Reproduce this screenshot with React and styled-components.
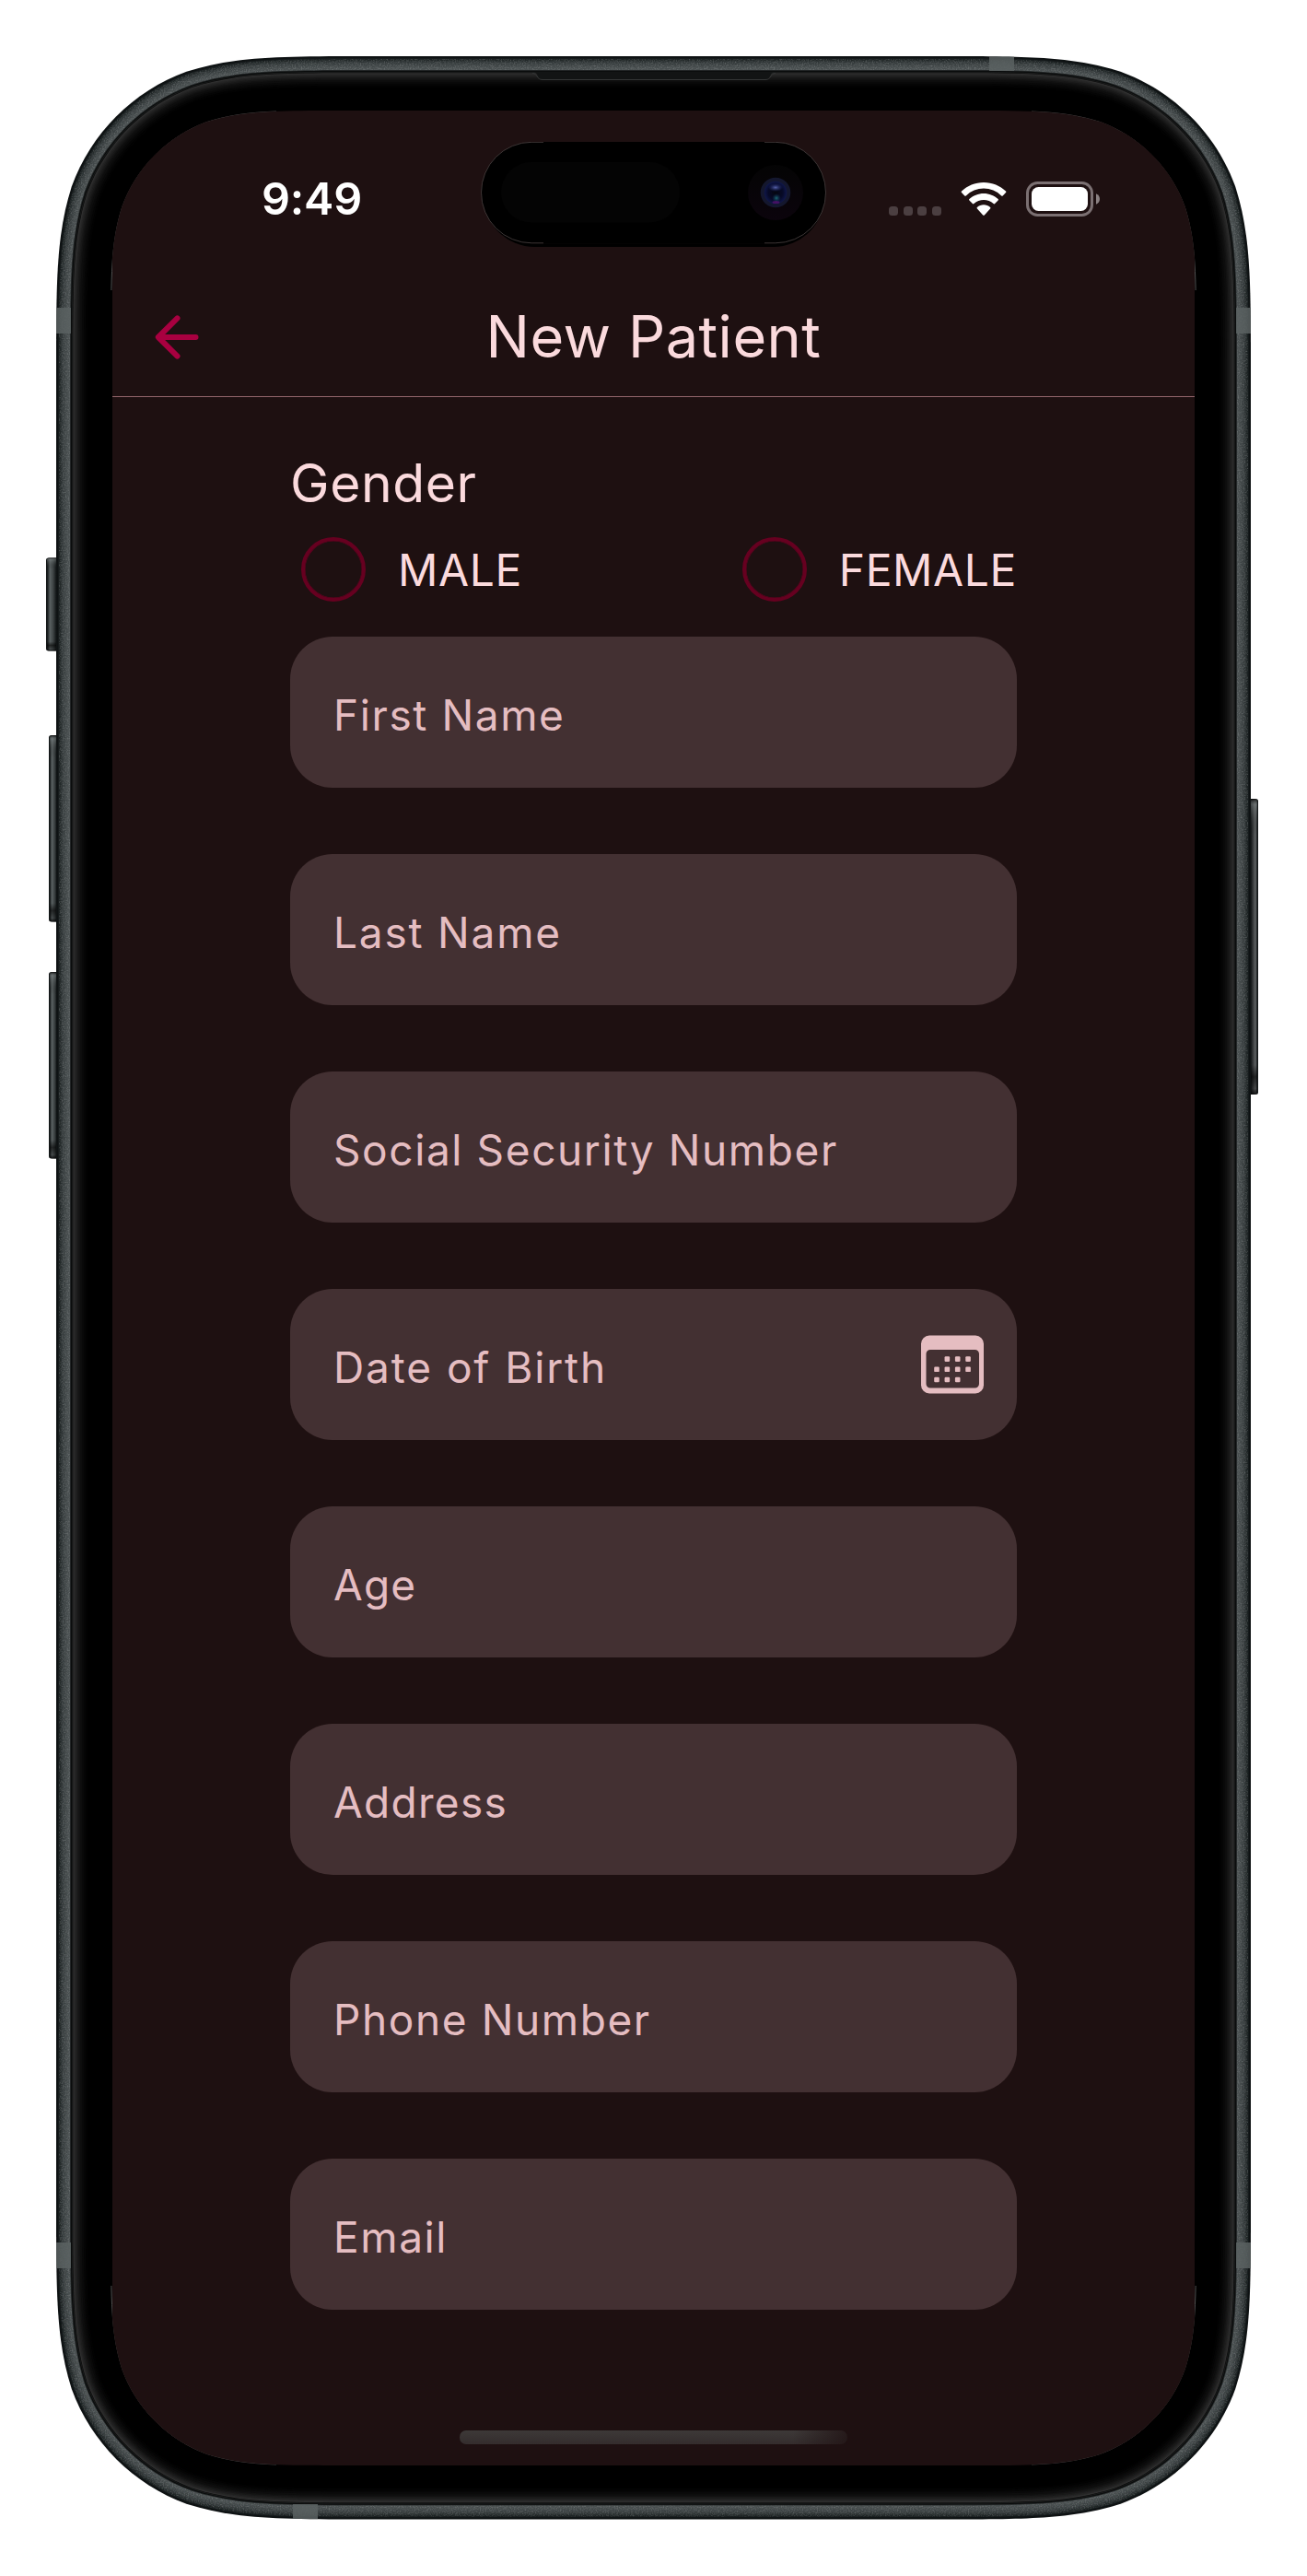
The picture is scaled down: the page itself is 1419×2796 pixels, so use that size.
import React from "react";
import styled, { createGlobalStyle } from "styled-components";

const GlobalStyle = createGlobalStyle`
  * { box-sizing: border-box; }
  html, body { margin: 0; padding: 0; background: #ffffff; }
  body { font-family: Inter, "Liberation Sans", sans-serif; }
`;

/* Continuous-curvature rounded rectangle, as used for the device corners. */
function smoothRect(x, y, w, h, r) {
  const R = x + w;
  const B = y + h;
  const a = 1.52866 * r, b = 1.08849 * r, c = 0.86841 * r, d = 0.63149 * r;
  const e = 0.07491 * r, f = 0.37282 * r, g = 0.16906 * r;
  return [
    `M${x + a} ${y}`, `L${R - a} ${y}`,
    `C${R - b} ${y} ${R - c} ${y} ${R - d} ${y + e}`,
    `C${R - f} ${y + g} ${R - g} ${y + f} ${R - e} ${y + d}`,
    `C${R} ${y + c} ${R} ${y + b} ${R} ${y + a}`,
    `L${R} ${B - a}`,
    `C${R} ${B - b} ${R} ${B - c} ${R - e} ${B - d}`,
    `C${R - g} ${B - f} ${R - f} ${B - g} ${R - d} ${B - e}`,
    `C${R - c} ${B} ${R - b} ${B} ${R - a} ${B}`,
    `L${x + a} ${B}`,
    `C${x + b} ${B} ${x + c} ${B} ${x + d} ${B - e}`,
    `C${x + f} ${B - g} ${x + g} ${B - f} ${x + e} ${B - d}`,
    `C${x} ${B - c} ${x} ${B - b} ${x} ${B - a}`,
    `L${x} ${y + a}`,
    `C${x} ${y + b} ${x} ${y + c} ${x + e} ${y + d}`,
    `C${x + g} ${y + f} ${x + f} ${y + g} ${x + d} ${y + e}`,
    `C${x + c} ${y} ${x + b} ${y} ${x + a} ${y}`, "Z",
  ].join(" ");
}

const screenClip = smoothRect(-2, 0, 1179, 2556, 165);

const Page = styled.div`
  width: 1419px;
  height: 2796px;
  padding: 120px 122px;
  position: relative;
  background: #ffffff;
`;

const ShellArt = styled.svg`
  position: absolute;
  inset: 0;
  display: block;
`;

const Screen = styled.main`
  position: relative;
  width: 1175px;
  height: 2556px;
  display: flex;
  flex-direction: column;
  background: #1e1011;
  clip-path: path("${screenClip}");
`;

const StatusBar = styled.div`
  flex: none;
  height: 180px;
  padding: 11px 102px 0 162px;
  display: flex;
  align-items: center;
  justify-content: space-between;
`;

const Clock = styled.span`
  font-size: 48.5px;
  line-height: 60px;
  font-weight: 600;
  letter-spacing: -0.2px;
  color: #ffffff;
`;

const StatusIcons = styled.div`
  display: flex;
  align-items: center;
  height: 38px;
`;

const SignalDots = styled.div`
  display: flex;
  align-self: flex-end;
  gap: 5.6px;
  margin: 0 21px 1px 0;
`;

const SignalDot = styled.i`
  width: 10px;
  height: 10px;
  border-radius: 3.5px;
  background: #4b3f41;
`;

const WifiIcon = styled.svg`
  display: block;
  margin-right: 21px;
`;

const BatteryIcon = styled.svg`
  display: block;
`;

const Island = styled.div`
  position: absolute;
  left: 400px;
  top: 34px;
`;

const AppBar = styled.header`
  flex: none;
  height: 131px;
  padding: 0 46px;
  display: grid;
  grid-template-columns: 48px 1fr 48px;
  align-items: center;
  border-bottom: 1px solid #93666c;
`;

const BackButton = styled.button`
  padding: 1px 0 0;
  border: 0;
  background: none;
  display: flex;
`;

const Title = styled.h1`
  margin: 0;
  text-align: center;
  font-size: 63px;
  line-height: 80px;
  font-weight: 400;
  letter-spacing: 0.5px;
  color: #fbdadd;
`;

const Form = styled.form`
  padding: 59px 193px 0;
  display: flex;
  flex-direction: column;
`;

const GroupLabel = styled.div`
  font-size: 57px;
  line-height: 70px;
  letter-spacing: 0.6px;
  color: #fbdadd;
`;

const RadioRow = styled.div`
  margin: 23px 0 38px;
  padding-left: 12px;
  display: flex;
  justify-content: space-between;
`;

const RadioOption = styled.label`
  display: flex;
  align-items: center;
  gap: 35px;
  height: 70px;
`;

const RadioCircle = styled.span`
  width: 70px;
  height: 70px;
  border: 4.5px solid #660020;
  border-width: 4.5px;
  box-shadow: inset 0 0 0 0.5px #660020;
  border-radius: 50%;
`;

const RadioText = styled.span`
  padding-top: 2px;
  font-size: 48px;
  line-height: 60px;
  letter-spacing: 0.6px;
  color: #fbdadd;
`;

const FieldList = styled.div`
  display: flex;
  flex-direction: column;
  gap: 72px;
`;

const Field = styled.div`
  height: 164px;
  padding: 6px 36px 0 47px;
  display: flex;
  align-items: center;
  justify-content: space-between;
  border-radius: 46px;
  background: #433032;
`;

const Placeholder = styled.span`
  font-size: 46px;
  line-height: 60px;
  letter-spacing: ${(p) => p.$tracking || 1.6}px;
  color: #e5bdc1;
`;

const CalendarIcon = styled.svg`
  display: block;
  margin-top: -6px;
`;

const HomeIndicator = styled.div`
  position: absolute;
  left: 377px;
  top: 2518px;
  width: 421px;
  height: 14.5px;
  border-radius: 7px;
  background:
    linear-gradient(90deg, rgba(30, 16, 17, 0) 86%, rgba(30, 16, 17, 0.75) 100%),
    linear-gradient(180deg, #3d3938, #342d2d);
`;

/* Tone of the metal rim and glass edge, outermost first: [inset, colour]. */
const rings = [
  [0, "#101415"], [1, "#0e1213"], [2, "#161b1c"], [3, "#1c2223"], [4, "#232929"],
  [5, "#2a3031"], [6, "#303637"], [7, "#363c3d"], [8, "#3b4142"], [10, "#424849"],
  [12, "#484e4f"], [14, "#4a5051"], [15, "#2a2e2f"], [15.8, "#0b0d0d"],
  [17, "#1d1f1f"], [17.7, "#090909"], [18.3, "#303030"], [19.3, "#292929"],
  [20.3, "#242424"], [21.5, "#1e1e1e"], [23, "#181818"], [24.5, "#121212"],
  [26, "#0d0d0d"], [28, "#090909"], [30, "#050505"], [32, "#020202"], [34, "#000000"],
];

const bands = [
  [61, 334, 16, 28], [1342, 334, 16, 28], [61, 2434, 16, 28],
  [1342, 2434, 16, 28], [1074, 61, 27, 16], [318, 2718, 27, 16.5],
];

const buttons = [
  { x: 50, y: 605.5, w: 14, h: 101, side: "L" },
  { x: 53, y: 798, w: 11, h: 202.5, side: "L" },
  { x: 53, y: 1055, w: 11, h: 202.5, side: "L" },
  { x: 1355, y: 867, w: 11, h: 321, side: "R" },
];

function Shell() {
  const outer = smoothRect(61, 61, 1297, 2673.5, 224);
  return (
    <ShellArt width="1419" height="2796" viewBox="0 0 1419 2796">
      <defs>
        <linearGradient id="keyL" x1="0" x2="1" y1="0" y2="0">
          <stop offset="0" stopColor="#0c0f0f" />
          <stop offset="0.14" stopColor="#202526" />
          <stop offset="0.3" stopColor="#596061" />
          <stop offset="0.55" stopColor="#3d4344" />
          <stop offset="0.78" stopColor="#141819" />
        </linearGradient>
        <linearGradient id="keyR" x1="1" x2="0" y1="0" y2="0">
          <stop offset="0" stopColor="#0c0f0f" />
          <stop offset="0.12" stopColor="#202526" />
          <stop offset="0.26" stopColor="#606364" />
          <stop offset="0.5" stopColor="#383b3c" />
          <stop offset="0.75" stopColor="#0e1112" />
        </linearGradient>
        <linearGradient id="keyShade" x1="0" x2="0" y1="0" y2="1">
          <stop offset="0" stopColor="#000" stopOpacity="0.85" />
          <stop offset="0.02" stopColor="#8c9494" stopOpacity="0.4" />
          <stop offset="0.12" stopColor="#000" stopOpacity="0" />
          <stop offset="0.9" stopColor="#000" stopOpacity="0" />
          <stop offset="0.94" stopColor="#000" stopOpacity="0.6" />
          <stop offset="0.98" stopColor="#000" stopOpacity="0.2" />
          <stop offset="1" stopColor="#000" stopOpacity="0.8" />
        </linearGradient>
        <filter id="grain" x="0" y="0" width="100%" height="100%">
          <feTurbulence type="fractalNoise" baseFrequency="0.7" numOctaves="2" seed="4" />
          <feColorMatrix values="0 0 0 0 0.62  0 0 0 0 0.64  0 0 0 0 0.64  1.2 0 0 0 -0.5" />
        </filter>
        <mask id="rim">
          <path d={smoothRect(64, 64, 1291, 2667.5, 221)} fill="#fff" />
          <path d={smoothRect(76, 76, 1267, 2643.5, 209)} fill="#000" />
        </mask>
        <clipPath id="body"><path d={outer} /></clipPath>
        <clipPath id="corners">
          <path d="M115 115h185v200h-185z M1120 115h185v200h-185z M115 2481h185v200h-185z M1120 2481h185v200h-185z" />
        </clipPath>
      </defs>
      {buttons.map((k) => (
        <g key={`${k.x}-${k.y}`}>
          <rect x={k.x} y={k.y} width={k.w} height={k.h} rx="2.5" fill={`url(#key${k.side})`} />
          <rect x={k.x + 1} y={k.y} width={k.w - 2} height={k.h} rx="2.5" fill="url(#keyShade)" />
        </g>
      ))}
      {rings.map(([i, color]) => (
        <path key={i} d={smoothRect(61 + i, 61 + i, 1297 - 2 * i, 2673.5 - 2 * i, 224 - i)} fill={color} />
      ))}
      <rect width="1419" height="2796" filter="url(#grain)" mask="url(#rim)" opacity="0.45" />
      <g clipPath="url(#body)">
        {bands.map(([x, y, w, h]) => (
          <rect key={`${x}-${y}`} x={x} y={y} width={w} height={h} fill="#5a6161" opacity="0.85" />
        ))}
      </g>
      <path d="M580 78h260c-3 0-4 8-9 8.5H589c-5-.5-6-8.5-9-8.5z" fill="#121414" />
      <path d="M578 79.5c6 0 4 7 11 7h242c7 0 5-7 11-7" fill="none" stroke="#343636" strokeWidth="1" />
      <path d={smoothRect(120.5, 120.2, 1178, 2555.6, 165)} fill="none" stroke="#5a5a5a" strokeWidth="0.9" clipPath="url(#corners)" />
    </ShellArt>
  );
}

function CameraIsland() {
  return (
    <Island>
      <svg width="376" height="116" viewBox="0 0 376 116" style={{ display: "block" }}>
        <defs>
          <radialGradient id="lens">
            <stop offset="0" stopColor="#05060f" />
            <stop offset="0.65" stopColor="#070a28" />
            <stop offset="1" stopColor="#10174a" />
          </radialGradient>
          <radialGradient id="shine">
            <stop offset="0" stopColor="#5560a8" />
            <stop offset="1" stopColor="#202a70" stopOpacity="0" />
          </radialGradient>
          <radialGradient id="glint">
            <stop offset="0" stopColor="#1c6a72" />
            <stop offset="1" stopColor="#0c2a50" stopOpacity="0" />
          </radialGradient>
          <linearGradient id="cup" x1="0" x2="0" y1="0" y2="1">
            <stop offset="0" stopColor="#040404" />
            <stop offset="1" stopColor="#0b040c" />
          </linearGradient>
        </defs>
        <rect x="3" y="3" width="370" height="111" rx="55.5" fill="#000" />
        <rect x="0.5" y="0.3" width="374" height="109.5" rx="54.7" fill="#000" stroke="#4b4343" strokeWidth="0.8" />
        <path d="M68 .4h240M68 109.7h240" stroke="#000" strokeWidth="2" />
        <rect x="22" y="22" width="194" height="65.5" rx="32.7" fill="#040404" />
        <circle cx="320" cy="55" r="30" fill="url(#cup)" />
        <circle cx="320" cy="55" r="16.3" fill="#14172e" />
        <circle cx="320" cy="55" r="12.3" fill="url(#lens)" />
        <ellipse cx="320" cy="49.5" rx="8" ry="4.5" fill="url(#shine)" />
        <circle cx="321" cy="61" r="5" fill="url(#glint)" />
        <ellipse cx="320.5" cy="65.5" rx="4" ry="1.5" fill="#581070" opacity="0.75" />
      </svg>
    </Island>
  );
}

function Wifi() {
  return (
    <WifiIcon width="50" height="38" viewBox="0 0 50 38" fill="#fff">
      <path d="M25 1C15.600 1 7.200 4.600 1 10.500Q.300 11.200 1 12L4.300 15.400Q5 16.100 5.800 15.400A27.500 27.500 0 0 1 44.200 15.400Q45 16.100 45.700 15.400L49 12Q49.700 11.200 49 10.500C42.800 4.600 34.400 1 25 1z" />
      <path d="M25 12.900c-6 0-11.500 2.300-15.600 6.100q-.800.800 0 1.500l3.500 3.600q.7.700 1.500 0a15.600 15.600 0 0 1 21.200 0q.8.700 1.500 0l3.500-3.600q.800-.700 0-1.500c-4.100-3.800-9.600-6.100-15.600-6.100z" />
      <path d="M25 25.300c-2.700 0-5.200 1-7.100 2.700q-.8.700 0 1.500l6.300 6.900q.8.700 1.600 0l6.300-6.900q.8-.800 0-1.500c-1.900-1.700-4.400-2.700-7.100-2.700z" />
    </WifiIcon>
  );
}

function Battery() {
  return (
    <BatteryIcon width="81" height="38" viewBox="0 0 81 38">
      <rect x="1.500" y="1.500" width="70" height="35" rx="11" fill="none" stroke="#7b7072" strokeWidth="3" />
      <rect x="6" y="6" width="61" height="26" rx="7.500" fill="#fff" />
      <path d="M76 13.300c2.500 1 4 3.200 4 5.700s-1.500 4.700-4 5.700z" fill="#8b8283" />
    </BatteryIcon>
  );
}

function Calendar() {
  const days = [[1, 0], [2, 0], [3, 0], [0, 1], [1, 1], [2, 1], [3, 1], [0, 2], [1, 2], [2, 2]];
  return (
    <CalendarIcon width="68" height="64" viewBox="0 0 68 64" fill="#e5bdc1">
      <path
        fillRule="evenodd"
        d="M9 0.500h50a9 9 0 0 1 9 9v45a9 9 0 0 1-9 9H9a9 9 0 0 1-9-9v-45a9 9 0 0 1 9-9zM10 16a4.500 4.500 0 0 0-4.500 4.500v32.500a4.500 4.500 0 0 0 4.500 4.500h48.500a4.500 4.500 0 0 0 4.500-4.500V20.500a4.500 4.500 0 0 0-4.500-4.500z"
      />
      {days.map(([c, r]) => (
        <rect key={`${c}${r}`} x={14.2 + c * 11.35} y={23.3 + r * 11.2} width="5.600" height="5.600" rx="1.200" />
      ))}
    </CalendarIcon>
  );
}

const fields = [
  { label: "First Name" },
  { label: "Last Name", tracking: 1.8 },
  { label: "Social Security Number" },
  { label: "Date of Birth", calendar: true, tracking: 1.9 },
  { label: "Age", tracking: 1.2 },
  { label: "Address", tracking: 1.3 },
  { label: "Phone Number" },
  { label: "Email" },
];

export default function App() {
  return (
    <>
      <GlobalStyle />
      <Page>
        <Shell />
        <Screen>
          <StatusBar>
            <Clock>9:49</Clock>
            <StatusIcons>
              <SignalDots>
                {[0, 1, 2, 3].map((n) => <SignalDot key={n} />)}
              </SignalDots>
              <Wifi />
              <Battery />
            </StatusIcons>
          </StatusBar>
          <AppBar>
            <BackButton type="button" aria-label="Back">
              <svg width="48" height="48" viewBox="0 0 48 48" fill="none" stroke="#a80040" strokeWidth="6" strokeLinecap="round" strokeLinejoin="round">
                <path d="M24.500 3.400L3.800 24L24.500 44.600M4.500 24H44.500" />
              </svg>
            </BackButton>
            <Title>New Patient</Title>
          </AppBar>
          <Form>
            <GroupLabel>Gender</GroupLabel>
            <RadioRow>
              <RadioOption><RadioCircle /><RadioText>MALE</RadioText></RadioOption>
              <RadioOption><RadioCircle /><RadioText>FEMALE</RadioText></RadioOption>
            </RadioRow>
            <FieldList>
              {fields.map((f) => (
                <Field key={f.label}>
                  <Placeholder $tracking={f.tracking}>{f.label}</Placeholder>
                  {f.calendar && <Calendar />}
                </Field>
              ))}
            </FieldList>
          </Form>
          <CameraIsland />
          <HomeIndicator />
        </Screen>
      </Page>
    </>
  );
}
